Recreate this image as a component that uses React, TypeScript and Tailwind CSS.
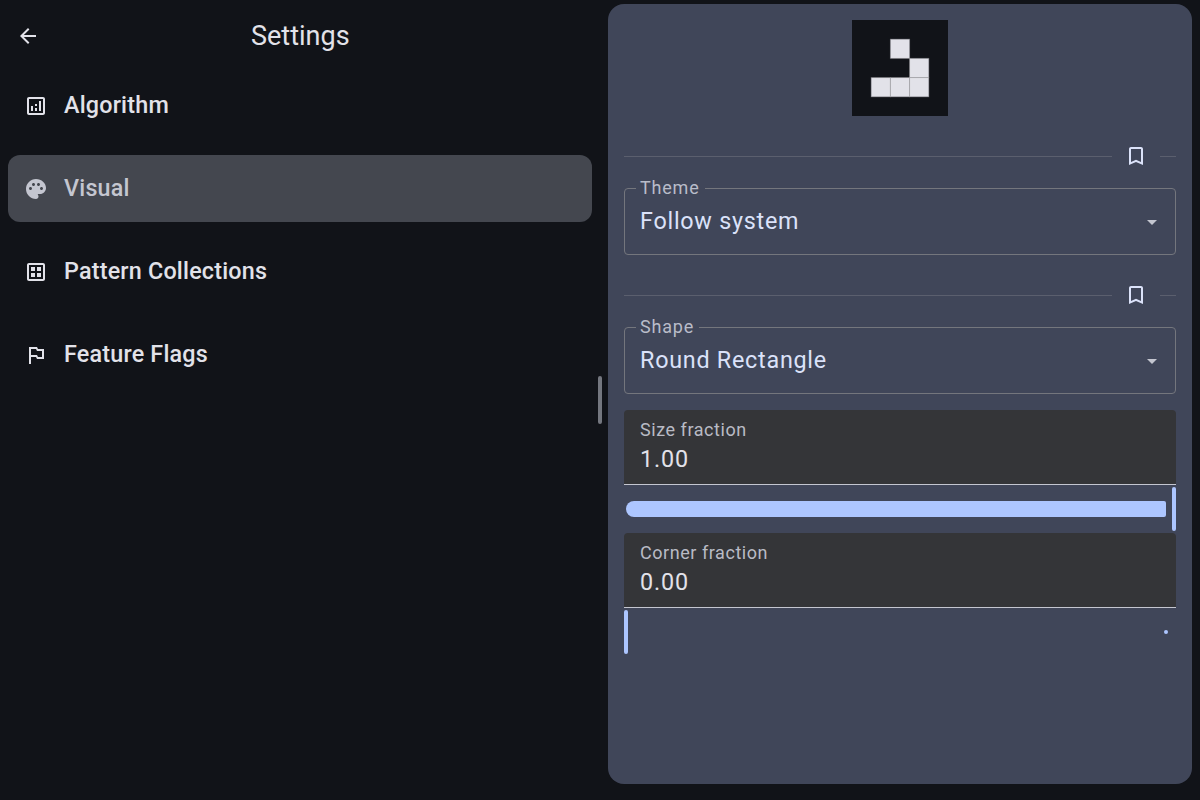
import React from "react";

type IconProps = { d: string; className?: string };

function Icon({ d, className = "" }: IconProps) {
  return (
    <svg viewBox="0 0 24 24" fill="currentColor" className={`size-6 shrink-0 ${className}`}>
      <path fillRule="evenodd" d={d} />
    </svg>
  );
}

const icons = {
  back: "M20 11H7.83l5.59-5.59L12 4l-8 8 8 8 1.41-1.41L7.83 13H20v-2z",
  analytics:
    "M19 3H5c-1.1 0-2 .9-2 2v14c0 1.1.9 2 2 2h14c1.1 0 2-.9 2-2V5c0-1.1-.9-2-2-2zm0 16H5V5h14v14zM7 12h2v5H7zM15 7h2v10h-2zM11 14h2v3h-2zM11 10h2v2h-2z",
  palette:
    "M12 2C6.49 2 2 6.49 2 12s4.49 10 10 10c1.38 0 2.5-1.12 2.5-2.5 0-.61-.23-1.2-.64-1.67-.08-.1-.13-.21-.13-.33 0-.28.22-.5.5-.5H16c3.31 0 6-2.69 6-6 0-4.96-4.49-9-10-9zm-5.5 11c-.83 0-1.5-.67-1.5-1.5S5.67 10 6.5 10s1.5.67 1.5 1.5S7.33 13 6.5 13zm3-4C8.67 9 8 8.33 8 7.5S8.67 6 9.5 6s1.5.67 1.5 1.5S10.33 9 9.5 9zm5 0c-.83 0-1.5-.67-1.5-1.5S13.67 6 14.5 6s1.5.67 1.5 1.5S15.33 9 14.5 9zm3 4c-.83 0-1.5-.67-1.5-1.5s.67-1.5 1.5-1.5 1.5.67 1.5 1.5-.67 1.5-1.5 1.5z",
  dataset:
    "M19 3H5c-1.1 0-2 .9-2 2v14c0 1.1.9 2 2 2h14c1.1 0 2-.9 2-2V5c0-1.1-.9-2-2-2zm0 16H5V5h14v14zM7 7h4v4H7zM13 7h4v4h-4zM7 13h4v4H7zM13 13h4v4h-4z",
  flag: "M14 6l-1-2H5v17h2v-7h5l1 2h7V6h-6zm4 8h-4l-1-2H7V6h5l1 2h5v6z",
  bookmark: "M17 3H7c-1.1 0-2 .9-2 2v16l7-3 7 3V5c0-1.1-.9-2-2-2zm0 15l-5-2.18L7 18V5h10v13z",
  dropdown: "M7 10l5 5 5-5z",
};

const categories = [
  { label: "Algorithm", icon: icons.analytics },
  { label: "Visual", icon: icons.palette, selected: true },
  { label: "Pattern Collections", icon: icons.dataset },
  { label: "Feature Flags", icon: icons.flag },
];

function Preview() {
  const cells = [[2, 1], [3, 2], [1, 3], [2, 3], [3, 3]];
  return (
    <svg viewBox="0 0 96 96" className="size-24 self-center bg-[#111318]">
      {cells.map(([x, y]) => (
        <rect
          key={`${x}-${y}`}
          x={x * 19.2}
          y={y * 19.2}
          width="19.2"
          height="19.2"
          fill="#e2e2e9"
          stroke="#9a9a9e"
          strokeOpacity="0.4"
          strokeWidth="1"
        />
      ))}
    </svg>
  );
}

function BookmarkDivider() {
  return (
    <div className="flex h-12 items-center">
      <div className="h-px flex-1 bg-[#5b5f6e]" />
      <div className="flex w-12 justify-center text-[#dbe2f9]">
        <Icon d={icons.bookmark} />
      </div>
      <div className="h-px w-4 bg-[#5b5f6e]" />
    </div>
  );
}

function Select({ label, value }: { label: string; value: string }) {
  return (
    <fieldset className="h-[75px] min-w-0 rounded border border-[#74767d] px-[11px] pt-[7px]">
      <legend className="h-4 pr-[5px] pl-1 text-[18px] leading-4 tracking-[0.8px] text-[#b9bcc9]">{label}</legend>
      <div className="flex h-9 items-center justify-between pl-1">
        <span className="text-[23.33px] leading-9 tracking-[0.75px] text-[#dbe2f9]">{value}</span>
        <Icon d={icons.dropdown} className="mt-0.5 text-[#c4c6d0]" />
      </div>
    </fieldset>
  );
}

function NumberField({ label, value }: { label: string; value: string }) {
  return (
    <div className="flex h-[75px] flex-col rounded-t border-b border-[#c4c6d0] bg-[#343538] px-4 pt-2">
      <span className="text-[18px] leading-6 tracking-[0.55px] text-[#b9bbc5]">{label}</span>
      <span className="text-[23.33px] leading-[34px] tracking-[0.85px] text-[#e2e2e9]">{value}</span>
    </div>
  );
}

export default function App() {
  return (
    <div className="flex h-[800px] w-[1200px] overflow-hidden bg-[#111318] font-['Roboto',sans-serif] text-[#e2e2e9]">
      <section className="flex w-[592px] flex-col pl-2">
        <header className="flex h-[72px] items-center pl-2">
          <Icon d={icons.back} />
          <h1 className="ml-[211px] text-[27px] leading-9">Settings</h1>
        </header>
        <nav className="flex flex-col gap-4">
          {categories.map((c) => (
            <div
              key={c.label}
              className={`flex h-[67px] items-center gap-4 rounded-xl px-4 ${c.selected ? "bg-[#44474f] text-[#c4c6d0]" : ""}`}
            >
              <Icon d={c.icon} />
              <span className="pb-px text-[23.33px] font-medium leading-[34px] tracking-[0.2px]">{c.label}</span>
            </div>
          ))}
        </nav>
      </section>
      <div className="flex w-4 items-center justify-center">
        <div className="h-12 w-1 rounded-full bg-[#74777f]" />
      </div>
      <main className="mt-1 mb-4 flex w-[584px] flex-col rounded-2xl bg-[#404659] px-4 pt-4">
        <Preview />
        <div className="h-4" />
        <BookmarkDivider />
        <Select label="Theme" value="Follow system" />
        <div className="h-4" />
        <BookmarkDivider />
        <Select label="Shape" value="Round Rectangle" />
        <div className="h-4" />
        <NumberField label="Size fraction" value="1.00" />
        <div className="flex h-12 items-center gap-1.5 pl-0.5">
          <div className="h-4 flex-1 rounded-l-lg rounded-r-xs bg-[#adc6ff]" />
          <div className="h-11 w-1 rounded-full bg-[#adc6ff]" />
        </div>
        <NumberField label="Corner fraction" value="0.00" />
        <div className="flex h-12 items-center justify-between pr-2">
          <div className="h-11 w-1 rounded-full bg-[#adc6ff]" />
          <div className="size-1 rounded-full bg-[#adc6ff]" />
        </div>
      </main>
    </div>
  );
}
